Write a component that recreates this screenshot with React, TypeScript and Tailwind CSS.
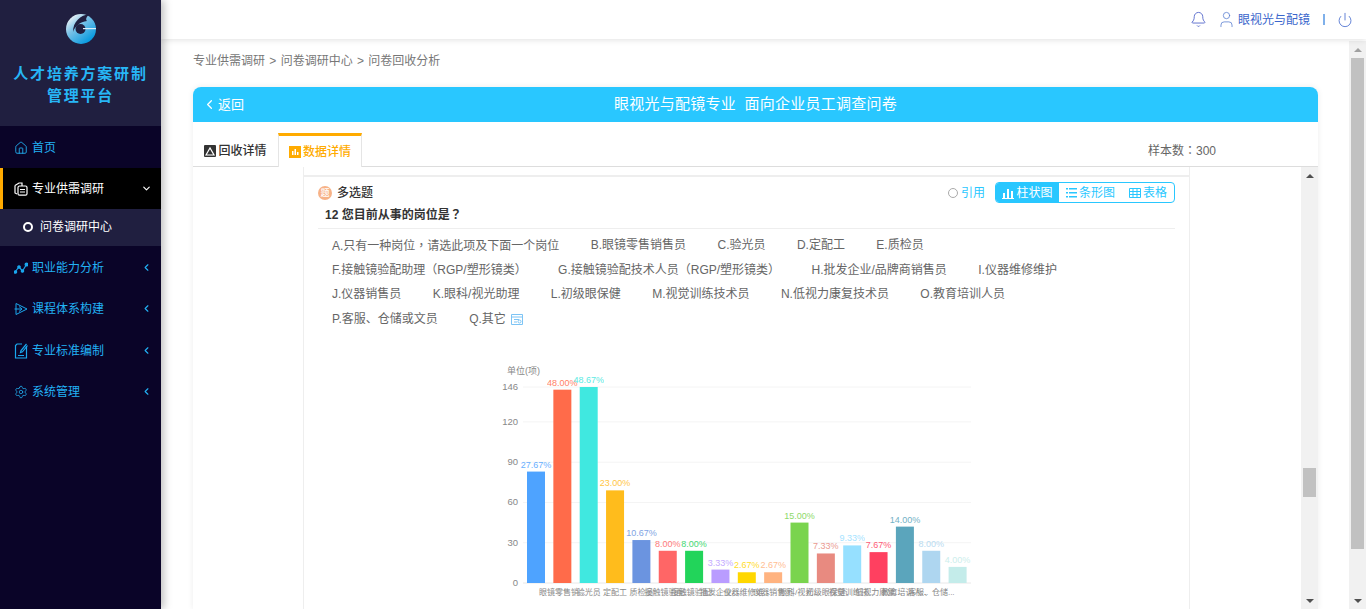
import React from "react";
import { Home, ChevronDown, ChevronLeft, Bell, User, Power, Settings } from "lucide-react";

const font = { fontFamily: '"Liberation Sans","Noto Sans CJK SC",sans-serif' };

const bars: [number, string, string][] = [
  [83, "#4ea3ff", "27.67%"],
  [144, "#ff6b4a", "48.00%"],
  [146, "#40e8e0", "48.67%"],
  [69, "#ffbc1c", "23.00%"],
  [32, "#6b94e0", "10.67%"],
  [24, "#ff6666", "8.00%"],
  [24, "#22d45a", "8.00%"],
  [10, "#b99cff", "3.33%"],
  [8, "#ffd700", "2.67%"],
  [8, "#ffb380", "2.67%"],
  [45, "#7ad44e", "15.00%"],
  [22, "#e88a80", "7.33%"],
  [28, "#96e0ff", "9.33%"],
  [23, "#ff4060", "7.67%"],
  [42, "#5ba5bc", "14.00%"],
  [24, "#aed6f0", "8.00%"],
  [12, "#c4ecea", "4.00%"],
];
const xLabels = ["", "眼镜零售销...", "验光员", "定配工", "质检员", "接触镜验配...", "接触镜验配...", "批发企业/...", "仪器维修维...", "仪器销售员", "眼科/视光...", "初级眼保健", "视觉训练技...", "低视力康复...", "教育培训人...", "客服、仓储...", ""];

const optionRows = [
  [["A.只有一种岗位", "，", "请选此项及下面一个岗位"], ["B.眼镜零售销售员"], ["C.验光员"], ["D.定配工"], ["E.质检员"]],
  [["F.接触镜验配助理（RGP/塑形镜类）"], ["G.接触镜验配技术人员（RGP/塑形镜类）"], ["H.批发企业/品牌商销售员"], ["I.仪器维修维护"]],
  [["J.仪器销售员"], ["K.眼科/视光助理"], ["L.初级眼保健"], ["M.视觉训练技术员"], ["N.低视力康复技术员"], ["O.教育培训人员"]],
  [["P.客服、仓储或文员"], ["Q.其它"]],
];

const Punct = ({ c }: { c: string }) => <span className="font-['Noto_Sans_CJK_TC']">{c}</span>;

function Chart() {
  const base = 223;
  const top = 27;
  const h = base - top;
  const y = (v: number) => base - (v / 146) * h;
  return (
    <svg width="700" height="249" viewBox="0 0 700 249" className="block" style={font}>
      <text x="204" y="14" fontSize="9" fill="#888">单位(项)</text>
      {[146, 120, 90, 60, 30, 0].map((v) => (
        <g key={v}>
          <line x1="220" x2="668" y1={y(v)} y2={y(v)} stroke={v === 0 ? "#e8e8e8" : "#f4f4f4"} />
          <text x="215" y={y(v) + 3} fontSize="9.5" fill="#888" textAnchor="end">{v}</text>
        </g>
      ))}
      {bars.map(([v, c, l], i) => {
        const x = 224 + i * 26.35;
        return (
          <g key={i}>
            <rect x={x} y={y(v)} width="18" height={(v / 146) * h} fill={c} />
            <text x={x + 9} y={y(v) - 4} fontSize="9" fill={c} opacity="0.85" textAnchor="middle">{l}</text>
            {xLabels[i] && (
              <text x={x + 9} y="235" fontSize="8" fill="#888" textAnchor="middle">{xLabels[i]}</text>
            )}
          </g>
        );
      })}
    </svg>
  );
}

function Logo() {
  return (
    <svg width="32" height="32" viewBox="0 0 32 32">
      <defs>
        <linearGradient id="lg" x1="0.1" y1="0.1" x2="0.75" y2="0.9">
          <stop offset="0" stopColor="#f4f5f7" />
          <stop offset="0.4" stopColor="#7cc3e8" />
          <stop offset="1" stopColor="#0a9be0" />
        </linearGradient>
      </defs>
      <circle cx="16" cy="16" r="15" fill="url(#lg)" />
      <path d="M25 1 C15 2 8 9 8 19 C10 13 15 9 22 8 C20 6 22 3 25 1Z" fill="#201f40" />
      <circle cx="15.5" cy="16" r="5" fill="#201f40" />
      <path d="M18 15h13v1.2H18z" fill="#d8eefa" />
    </svg>
  );
}

const DocsIcon = () => (
  <svg width="14" height="14" viewBox="0 0 14 14" fill="none" stroke="#fff" strokeWidth="1.2">
    <path d="M1 3.5 5 1h3v3M1 3.5V11l2 1" />
    <rect x="4" y="4" width="9" height="9.2" rx="1.5" />
    <path d="M6 7.5h5M6 10h5" />
  </svg>
);
const TrendIcon = () => (
  <svg width="14" height="14" viewBox="0 0 14 14" fill="#1aa7ee" stroke="#1aa7ee" strokeWidth="1.2">
    <path d="M1 11 5 6l3.5 4L12.5 3.5" fill="none" />
    <circle cx="1.5" cy="11" r="1.2" />
    <circle cx="5" cy="6" r="1.2" />
    <circle cx="8.5" cy="10" r="1.2" />
    <circle cx="12.5" cy="3.5" r="1.4" />
  </svg>
);
const CourseIcon = () => (
  <svg width="14" height="14" viewBox="0 0 14 14" fill="none" stroke="#1aa7ee" strokeWidth="1">
    <path d="M2 1.5 13 7 2 12.5Z" />
    <path d="M0.5 7H7M5 4.5l3 2.5-3 2.5" />
  </svg>
);
const EditDocIcon = () => (
  <svg width="14" height="16" viewBox="0 0 14 16" fill="none" stroke="#1aa7ee" strokeWidth="1.2">
    <path d="M8 1H3L1.5 2.5V15h11V3" />
    <path d="M12.5 1 7 7.5l-.5 2 2-.7L13.5 2.5M4 12.5h6" />
  </svg>
);

function NavRow({ icon, label, h }: { icon: React.ReactNode; label: string; h: string }) {
  return (
    <div className={`${h} flex items-center pl-[14px] pr-[9px] text-[12px] text-[#22b2f5]`}>
      <span className="mr-[4px] flex w-[14px] justify-center">{icon}</span>
      <span className="flex-1">{label}</span>
      <ChevronLeft size={11} strokeWidth={2.5} />
    </div>
  );
}

function Sidebar() {
  return (
    <aside className="z-20 flex h-full w-[161px] shrink-0 flex-col bg-[#0a0428] shadow-[3px_0_8px_rgba(0,0,0,0.25)]">
      <div className="flex h-[126px] flex-col items-center bg-[#201f40] pt-[13px]">
        <Logo />
        <div className="mt-[18px] text-center text-[15px] leading-[22px] font-bold tracking-[1.8px] text-[#27b6f6]">
          <div>人才培养方案研制</div>
          <div>管理平台</div>
        </div>
      </div>
      <div className="flex h-[42px] items-center pl-[14px] pt-[1px] text-[12px] text-[#22b2f5]">
        <Home size={14} strokeWidth={1.5} className="mr-[4px]" />
        首页
      </div>
      <div className="flex h-[41px] items-center border-l-[3px] border-[#ffab00] bg-black pl-[11px] pr-[9px] text-[12px] text-white">
        <span className="mr-[4px]"><DocsIcon /></span>
        <span className="flex-1">专业供需调研</span>
        <ChevronDown size={11} strokeWidth={2.5} />
      </div>
      <div className="flex h-[37px] items-center bg-[#201f40] pb-[1px] pl-[23px] text-[12px] text-white">
        <span className="mr-[7px] h-[10px] w-[10px] rounded-full border-2 border-white" />
        问卷调研中心
      </div>
      <NavRow h="h-[42px] pt-[1px]" icon={<TrendIcon />} label="职业能力分析" />
      <NavRow h="h-[41px]" icon={<CourseIcon />} label="课程体系构建" />
      <NavRow h="h-[42px] pt-[1px]" icon={<EditDocIcon />} label="专业标准编制" />
      <NavRow h="h-[41px]" icon={<Settings size={14} strokeWidth={1.3} />} label="系统管理" />
    </aside>
  );
}

function Scrollbar({ thumbTop, thumbH, arrowDark }: { thumbTop: string; thumbH: string; arrowDark: string }) {
  return (
    <div className="flex h-full w-[17px] shrink-0 flex-col items-center bg-[#f1f1f1]">
      <div className="flex h-[17px] w-full shrink-0 items-center justify-center">
        <div className={`h-0 w-0 border-x-4 border-b-4 border-x-transparent ${arrowDark}`} />
      </div>
      <div className={`w-[13px] shrink-0 bg-[#c1c1c1] ${thumbTop} ${thumbH}`} />
      <div className="flex-1" />
      <div className="flex h-[17px] w-full shrink-0 items-center justify-center">
        <div className="h-0 w-0 border-x-4 border-t-4 border-x-transparent border-t-[#505050]" />
      </div>
    </div>
  );
}

function SurveyPanel() {
  return (
    <div className="h-[442px] flex-1 overflow-hidden">
      <div className="ml-[110px] h-[500px] w-[887px] border-x border-[#eeeeee] pt-[8px]">
        <div className="border-t-2 border-[#eeeeee] px-[14px]">
          <div className="flex items-start justify-between">
            <div className="pt-[8px]">
              <div className="flex h-[16px] items-center text-[12px] font-medium text-[#333]">
                <span className="mr-[5px] flex h-[14px] w-[14px] items-center justify-center rounded-full bg-[#f7b287] text-[9px] leading-none text-white">题</span>
                多选题
              </div>
              <div className="ml-[7px] mt-[5px] text-[12px] leading-[16px] font-bold text-[#333]">12 您目前从事的岗位是<Punct c="？" /></div>
            </div>
            <div className="flex items-center pt-[5px]">
              <span className="mr-[3px] h-[10px] w-[10px] rounded-full border border-[#aaa]" />
              <span className="mr-[10px] text-[12px] text-[#29c7ff]">引用</span>
              <div className="flex h-[21px] w-[180px] items-center overflow-hidden rounded-[4px] border border-[#29c7ff] text-[12px] text-[#29c7ff]">
                <div className="flex h-full w-[63px] items-center justify-center gap-[2px] bg-[#29c7ff] pt-[1px] text-white">
                  <svg width="12" height="11" viewBox="0 0 12 11" fill="#fff"><path d="M0 10h12v1H0zM1 5h2v5H1zM5 1h2v9H5zM9 3h2v7H9z" /></svg>
                  柱状图
                </div>
                <div className="flex h-full w-[63px] items-center justify-center gap-[2px] pt-[1px]">
                  <svg width="11" height="10" viewBox="0 0 11 10" fill="#29c7ff"><path d="M0 0h2v1.5H0zM3 0h8v1.5H3zM0 4h2v1.5H0zM3 4h8v1.5H3zM0 8h2v1.5H0zM3 8h8v1.5H3z" /></svg>
                  条形图
                </div>
                <div className="flex h-full flex-1 items-center justify-center gap-[2px] pt-[1px]">
                  <svg width="12" height="10" viewBox="0 0 12 10" fill="none" stroke="#29c7ff"><path d="M.5.5h11v9H.5zM.5 3.5h11M.5 6.5h11M4 .5v9M8 .5v9" /></svg>
                  表格
                </div>
              </div>
            </div>
          </div>
          <div className="mt-[5px] border-t border-[#eeeeee] pl-[14px] pt-[4px] text-[12px] text-[#666]">
            {optionRows.map((row, i) => (
              <div key={i} className="flex h-[24.5px] items-center">
                {row.map((parts) => (
                  <span key={parts[0]} className="mr-[31.4px] flex items-center whitespace-pre last:mr-0">
                    <span>
                      {parts.map((p) => (p === "，" ? <Punct key={p} c={p} /> : p))}
                    </span>
                    {parts[0] === "Q.其它" && (
                      <svg className="ml-[5px]" width="12" height="12" viewBox="0 0 12 12" fill="none" stroke="#7dc4f5"><path d="M.5 1.5h11v10H.5zM.5 4h11M3 6.5h5M3 9h3" /><circle cx="8.5" cy="8.5" r="1.5" /></svg>
                    )}
                  </span>
                ))}
              </div>
            ))}
          </div>
          <div className="-ml-[15px] mt-[29px]"><Chart /></div>
        </div>
      </div>
    </div>
  );
}

export default function App() {
  return (
    <div className="flex h-[609px] w-[1366px] overflow-hidden bg-white" style={font}>
      <Sidebar />
      <div className="flex min-w-0 flex-1 flex-col">
        <header className="z-10 flex h-[39px] shrink-0 items-center justify-end bg-white pr-[13px] text-[12px] text-[#3a66cc] shadow-[0_1px_6px_rgba(0,0,0,0.12)]">
          <Bell size={17} strokeWidth={1.2} className="mr-[10px] text-[#4a5fc8]" />
          <User size={19} strokeWidth={1} className="mr-[2px] text-[#5a7fd0]" />
          <span>眼视光与配镜</span>
          <span className="ml-[13px] mr-[12px] h-[11px] w-[2px] bg-[#7fb0ea]" />
          <Power size={16} strokeWidth={1.2} className="text-[#3f66cc]" />
        </header>
        <div className="flex min-h-0 flex-1 pt-[2px]">
          <div className="min-w-0 flex-1 pl-[32px] pr-[31px]">
            <div className="flex h-[46px] items-center pb-[7px] text-[12px] text-[#777] [word-spacing:1px]">专业供需调研 &gt; 问卷调研中心 &gt; 问卷回收分析</div>
            <div className="rounded-t-[8px] bg-white shadow-[0_0_6px_rgba(0,0,0,0.08)]">
              <div className="relative flex h-[35px] items-center justify-center rounded-t-[8px] bg-[#29c7ff] text-[15px] tracking-[0.25px] text-white">
                <span className="absolute left-[9px] flex items-center text-[13px] tracking-normal">
                  <ChevronLeft size={15} strokeWidth={2} className="mr-[1px]" />
                  返回
                </span>
                <span className="[word-spacing:4px]">眼视光与配镜专业 面向企业员工调查问卷</span>
              </div>
              <div className="flex h-[45px] items-end border-b border-[#dddddd] pr-[102px] text-[12px]">
                <div className="flex h-[33px] w-[85px] items-center justify-center gap-[2px] pt-[2px] font-medium text-[#333]">
                  <svg width="12" height="12" viewBox="0 0 12 12"><rect width="12" height="12" rx="1" fill="#333" /><path d="M2 10 6 3l4 7Z" fill="none" stroke="#fff" strokeWidth="1.2" /></svg>
                  回收详情
                </div>
                <div className="-mb-px flex h-[34px] w-[84px] items-center justify-center gap-[2px] border-x border-t-[3px] border-x-[#e5e5e5] border-t-[#ffab00] bg-white font-medium text-[#ffab00]">
                  <svg width="12" height="12" viewBox="0 0 12 12"><rect width="12" height="12" fill="#ffab00" /><path d="M3 5h1.5v4H3zM5.5 3H7v6H5.5zM8 6h1.5v3H8z" fill="#fff" /></svg>
                  数据详情
                </div>
                <div className="flex-1" />
                <div className="mb-[6px] text-[#666]">样本数<Punct c="：" />300</div>
              </div>
              <div className="flex h-[442px]">
                <SurveyPanel />
                <Scrollbar thumbTop="mt-[284px]" thumbH="h-[29px]" arrowDark="border-b-[#505050]" />
              </div>
            </div>
          </div>
          <Scrollbar thumbTop="mt-0" thumbH="h-[491px]" arrowDark="border-b-[#a0a0a0]" />
        </div>
      </div>
    </div>
  );
}
